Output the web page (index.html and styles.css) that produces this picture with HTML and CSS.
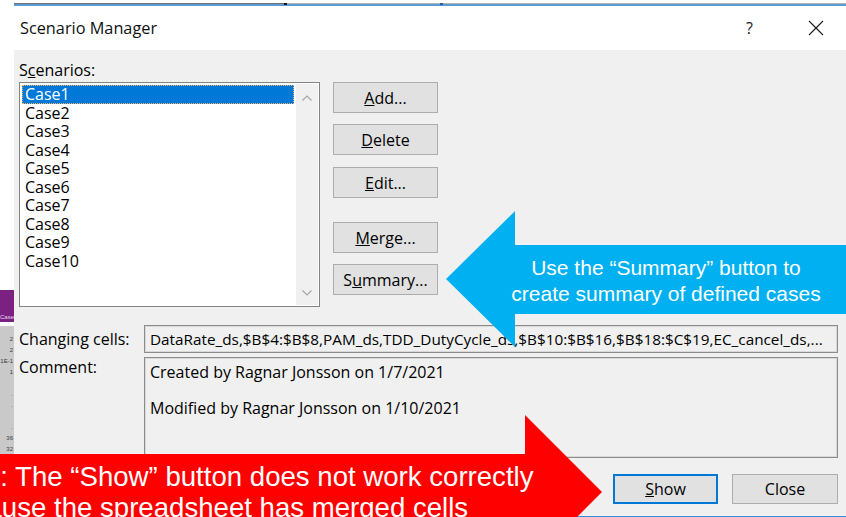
FILE: index.html
```html
<!DOCTYPE html>
<html lang="en">
<head>
<meta charset="utf-8">
<title>Scenario Manager</title>
<link rel="stylesheet" href="styles.css">
</head>
<body>
<div class="screen">
  <aside class="sheet">
    <div class="sheet-blank"></div>
    <div class="sheet-header">Case</div>
    <div class="sheet-gap"></div>
    <div class="sheet-rows">
      <span>2</span><span>2</span><span>1E-1</span><span>1</span><span></span><span>.</span><span>.</span><span></span><span>.</span><span>36</span><span>32</span>
    </div>
  </aside>

  <section class="dialog">
    <div class="frame-top"><i class="mark mark-a"></i><i class="mark mark-b"></i></div>
    <header class="titlebar">
      <span class="title">Scenario Manager</span>
      <span class="help">?</span>
      <svg class="close-icon" width="16" height="16" viewBox="0 0 16 16"><path d="M1 1 L15 15 M15 1 L1 15" stroke="#1a1a1a" stroke-width="1.1" fill="none"/></svg>
    </header>

    <div class="content">
      <div class="caption">S<u>c</u>enarios:</div>
      <div class="main-row">
        <div class="listbox">
          <ul class="items">
            <li class="selected">Case1</li>
            <li>Case2</li>
            <li>Case3</li>
            <li>Case4</li>
            <li>Case5</li>
            <li>Case6</li>
            <li>Case7</li>
            <li>Case8</li>
            <li>Case9</li>
            <li>Case10</li>
          </ul>
          <div class="scrollbar">
            <svg width="10" height="6" viewBox="0 0 10 6"><path d="M0.5 5.5 L5 1 L9.5 5.5" stroke="#a6a6a6" stroke-width="1.2" fill="none"/></svg>
            <svg width="10" height="6" viewBox="0 0 10 6"><path d="M0.5 0.5 L5 5 L9.5 0.5" stroke="#a6a6a6" stroke-width="1.2" fill="none"/></svg>
          </div>
        </div>
        <div class="actions">
          <button class="btn btn-add"><u>A</u>dd...</button>
          <button class="btn btn-delete"><u>D</u>elete</button>
          <button class="btn btn-edit"><u>E</u>dit...</button>
          <button class="btn btn-merge"><u>M</u>erge...</button>
          <button class="btn btn-summary">S<u>u</u>mmary...</button>
        </div>
      </div>

      <div class="field-row">
        <span class="field-label">Changing cells:</span>
        <div class="field cells">DataRate_ds,$B$4:$B$8,PAM_ds,TDD_DutyCycle_ds,$B$10:$B$16,$B$18:$C$19,EC_cancel_ds,...</div>
      </div>

      <div class="field-row comment-row">
        <span class="field-label">Comment:</span>
        <div class="field comment">
          <p>Created by Ragnar Jonsson on 1/7/2021</p>
          <p>&nbsp;</p>
          <p>Modified by Ragnar Jonsson on 1/10/2021</p>
        </div>
      </div>

      <div class="footer">
        <button class="btn btn-default"><u>S</u>how</button>
        <button class="btn btn-close">Close</button>
      </div>
    </div>
  </section>
</div>

<div class="callout callout-info">
  <svg class="arrow" width="400" height="136" viewBox="0 0 400 136"><polygon points="0,68 69,0 69,34 400,34 400,103 69,103 69,136" fill="#00b0f0"/></svg>
  <div class="callout-text">Use the “Summary” button to<br>create summary of defined cases</div>
</div>

<div class="callout callout-warn">
  <svg class="arrow" width="602" height="154" viewBox="0 0 602 154"><polygon points="0,39 525,39 525,0 602,77 525,154 525,115 0,115" fill="#ff0000"/></svg>
  <div class="callout-text">Note: The “Show” button does not work correctly<br>because the spreadsheet has merged cells</div>
</div>
</body>
</html>
```

FILE: styles.css
```css
* {
  box-sizing: border-box;
  margin: 0;
  padding: 0;
}

html,
body {
  width: 846px;
  height: 517px;
  overflow: hidden;
  background: #ffffff;
}

body {
  position: relative;
  font-family: "Open Sans", "Noto Sans", sans-serif;
  font-size: 16px;
  color: #000;
}

.screen {
  display: flex;
  height: 517px;
}

/* spreadsheet column peeking out on the left */
.sheet {
  width: 14px;
  flex: none;
  display: flex;
  flex-direction: column;
  overflow: hidden;
}

.sheet-blank {
  height: 290px;
}

.sheet-header {
  height: 32px;
  background: #7a2182;
  color: #e6d6ea;
  font: 6px/8px "Liberation Sans", sans-serif;
  padding-top: 23px;
  white-space: nowrap;
}

.sheet-gap {
  height: 4px;
}

.sheet-rows {
  flex: 1;
  background: #c9c9c9;
  padding: 8px 1px 0 0;
  display: flex;
  flex-direction: column;
  font: 6px/11px "Liberation Sans", sans-serif;
  color: #3a3a3a;
  text-align: right;
  white-space: nowrap;
}

.sheet-rows span {
  height: 11px;
}

/* dialog window */
.dialog {
  flex: 1;
  margin-top: 3px;
  display: flex;
  flex-direction: column;
  border-bottom: 1px solid #3f8fd8;
}

.frame-top {
  position: relative;
  height: 3px;
  background: linear-gradient(to bottom, #b4b4b4 0 1px, #5a9bd6 1px 3px);
}

.frame-top::before {
  content: "";
  position: absolute;
  left: 0;
  top: 0;
  width: 272px;
  height: 1px;
  background: #6f6f6f;
}

.mark {
  position: absolute;
  top: 0;
  width: 3px;
  height: 2px;
}

.mark-a {
  left: 270px;
  background: #111;
}

.mark-b {
  left: 426px;
  background: #1f5fa8;
}

.titlebar {
  height: 44px;
  flex: none;
  background: #fff;
  display: flex;
  align-items: center;
  padding-left: 6px;
}

.title {
  flex: 1;
  font-size: 16.3px;
  color: #111;
}

.help {
  font-size: 16px;
  color: #222;
  margin-right: 55px;
}

.close-icon {
  margin-right: 22px;
}

.content {
  flex: 1;
  background: #f0f0f0;
  padding: 11px 8px 0 5px;
  display: flex;
  flex-direction: column;
}

.caption {
  height: 18px;
  line-height: 18px;
}

.main-row {
  display: flex;
  margin-top: 3px;
}

.listbox {
  width: 301px;
  height: 225px;
  border: 1px solid #848484;
  background: #fff;
  display: flex;
}

.items {
  flex: 1;
  list-style: none;
  padding: 2px 2px 0 2px;
}

.items li {
  height: 18.55px;
  line-height: 18.55px;
  padding-left: 3px;
}

.items li.selected {
  background: #0078d7;
  color: #fff;
  outline: 1px dotted #f3b36a;
  outline-offset: -1px;
}

.scrollbar {
  width: 22px;
  margin: 1px 1px 1px 0;
  background: #f0f0f0;
  display: flex;
  flex-direction: column;
  justify-content: space-between;
  align-items: center;
  padding: 11px 0 9px;
}

.actions {
  margin-left: 13px;
  width: 105px;
  display: flex;
  flex-direction: column;
}

.btn {
  height: 31px;
  background: #e1e1e1;
  border: 1px solid #adadad;
  font: inherit;
  color: #000;
  text-align: center;
}

.btn-delete {
  margin-top: 11px;
}

.btn-edit {
  margin-top: 12px;
}

.btn-merge {
  margin-top: 24px;
}

.btn-summary {
  margin-top: 11px;
}

.field-row {
  display: flex;
  align-items: center;
  margin-top: 18px;
}

.field-label {
  width: 125px;
  flex: none;
  line-height: 18px;
}

.field {
  width: 694px;
  height: 28px;
  border: 1px solid #8c8c8c;
  box-shadow: inset 0 0 0 1px #d9d9d9;
  padding: 0 5px;
  line-height: 26px;
  white-space: nowrap;
  overflow: hidden;
}

.field.cells {
  font-size: 15.3px;
}

.comment-row {
  margin-top: 4px;
  align-items: flex-start;
}

.comment-row .field-label {
  padding-top: 1px;
}

.comment {
  height: 101px;
  padding-top: 5px;
  line-height: 18px;
}

.footer {
  margin-top: 16px;
  display: flex;
  justify-content: flex-end;
  gap: 14px;
}

.footer .btn {
  height: 30px;
  width: 106px;
}

.footer .btn-default {
  width: 105px;
  border: 2px solid #0078d7;
}

/* annotation arrows drawn over the dialog */
.callout {
  position: absolute;
  font-family: "Liberation Sans", Arial, sans-serif;
  color: #fff;
  white-space: nowrap;
}

.callout .arrow {
  position: absolute;
  left: 0;
  top: 0;
}

.callout-info {
  left: 446px;
  top: 211px;
  width: 400px;
  height: 136px;
}

.callout-info .callout-text {
  position: absolute;
  left: 20px;
  top: 44px;
  width: 400px;
  text-align: center;
  font-size: 21px;
  line-height: 26px;
}

.callout-warn {
  left: 0;
  top: 415px;
  width: 602px;
  height: 102px;
  overflow: hidden;
}

.callout-warn .callout-text {
  position: absolute;
  left: -58px;
  top: 46px;
  font-size: 27.6px;
  line-height: 31px;
}
```
